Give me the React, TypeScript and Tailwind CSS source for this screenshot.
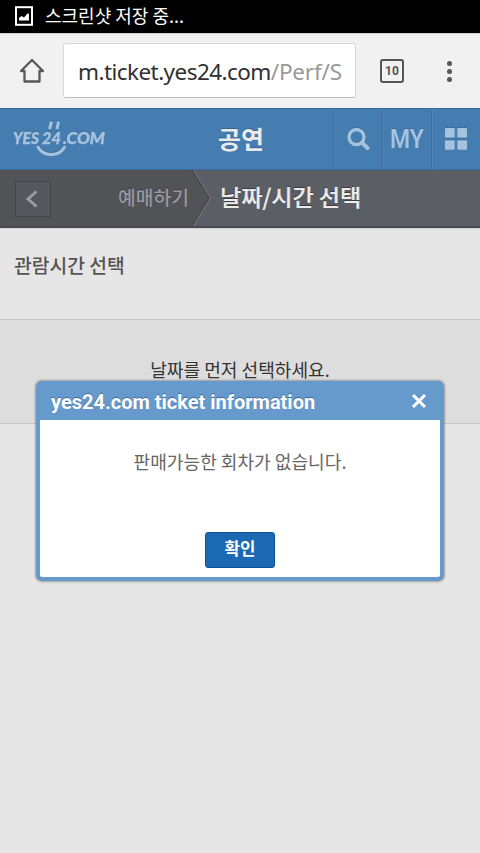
import { useState } from "react";

const sans = "font-['Noto_Sans_CJK_KR',sans-serif]";

function StatusBar() {
  return (
    <div className="h-[33px] bg-black flex items-center pl-[15px] gap-3 text-white">
      <svg width="18" height="20" viewBox="0 0 18 20" className="shrink-0 -mt-[2px]">
        <rect x="1" y="1.2" width="16" height="17.6" fill="none" stroke="#fff" strokeWidth="2" />
        <path d="M4 14.500v-2.500l2.500-2 2.500 1.500 4-4.500 1 1.500v6z" fill="#fff" />
      </svg>
      <span className="text-[18px] leading-none whitespace-nowrap -mt-[4px]">스크린샷 저장 중...</span>
    </div>
  );
}

function BrowserBar() {
  return (
    <div className="h-[75px] bg-[#f1f1f1] border-t border-[#d2d2d2] flex items-center">
      <button className="w-[63px] shrink-0 flex justify-center" aria-label="Home">
        <svg width="26" height="26" viewBox="0 0 26 26" fill="none" stroke="#585858" strokeWidth="2.300" strokeLinejoin="round">
          <path d="M13 2 2 13h3.500v10.500h15V13H24z" />
        </svg>
      </button>
      <div className="w-[293px] h-[55px] shrink-0 bg-white border border-[#d8d8d8] border-b-[#bdbdbd] rounded-[3px] pl-[14px] pr-[13px] -mt-[1px]">
        <div className="overflow-hidden whitespace-nowrap font-['Noto_Sans',sans-serif] text-[22.500px] tracking-[-0.560px] leading-[55px] text-[#303030]">
          m.ticket.yes24.com<span className="text-[#999] tracking-[-0.200px]">/Perf/S</span>
        </div>
      </div>
      <div className="ml-6 w-6 h-6 shrink-0 border-2 border-[#555] rounded-[3px] flex items-center justify-center font-['Roboto',sans-serif] font-bold text-[12px] text-[#555]">
        10
      </div>
      <div className="ml-[43px] flex flex-col gap-[3px]">
        <i className="size-[5px] rounded-full bg-[#555]" />
        <i className="size-[5px] rounded-full bg-[#555]" />
        <i className="size-[5px] rounded-full bg-[#555]" />
      </div>
    </div>
  );
}

function Logo() {
  return (
    <svg width="96" height="38" viewBox="0 0 96 38" fill="#a5c3df" className="drop-shadow-[0_-1px_0_#3a6b99]">
      <g fontFamily="Lato, sans-serif" fontWeight="900" fontStyle="italic" fontSize="17" stroke="#a5c3df" strokeWidth="0.400">
        <text x="1" y="24" textLength="26" lengthAdjust="spacingAndGlyphs">YES</text>
        <text x="30" y="24" textLength="19" lengthAdjust="spacingAndGlyphs">24</text>
        <text x="51" y="24" textLength="42" lengthAdjust="spacingAndGlyphs">.COM</text>
      </g>
      <path d="m39.500 1.500-2 7.500M46.500 1.500l-1.500 7.500" fill="none" stroke="#a5c3df" strokeWidth="3" />
      <path d="M26 27c5 9.500 21 10.500 26.500 0" fill="none" stroke="#a5c3df" strokeWidth="3" strokeLinecap="round" />
    </svg>
  );
}

function SiteHeader() {
  return (
    <header className="h-[62px] bg-[#467db1] border-t border-b border-t-[#386b9d] border-b-[#386b9d] flex items-stretch">
      <div className="w-[218px] shrink-0 pl-3 pt-[11px]">
        <Logo />
      </div>
      <h1 className="w-[115px] shrink-0 text-[25px] font-bold leading-[58px] text-[#e9eaeb] [text-shadow:0_-1px_0_#36648f]">
        공연
      </h1>
      <button className="w-[49px] shrink-0 border-l border-[#3e71a2] shadow-[inset_1px_0_0_#5186b7] flex items-center justify-center" aria-label="검색">
        <svg width="24" height="24" viewBox="0 0 24 24" fill="none" stroke="#a5c3df" className="drop-shadow-[0_-1px_0_#3a6b99]">
          <circle cx="10.500" cy="10" r="7.500" strokeWidth="3.300" />
          <path d="m16 15.500 5.500 5.500" strokeWidth="4" strokeLinecap="round" />
        </svg>
      </button>
      <button className="w-[49px] shrink-0 border-l border-[#3e71a2] shadow-[inset_1px_0_0_#5186b7] flex items-center justify-center" aria-label="MY">
        <svg width="38" height="34" viewBox="0 0 38 34" className="drop-shadow-[0_-1px_0_#3a6b99]">
          <text x="2" y="26" textLength="34" lengthAdjust="spacingAndGlyphs" fill="#a5c3df" fontFamily="Roboto, sans-serif" fontWeight="600" fontSize="25">MY</text>
        </svg>
      </button>
      <button className="w-[49px] shrink-0 border-l border-[#3e71a2] shadow-[inset_1px_0_0_#5186b7] flex items-center justify-center" aria-label="메뉴">
        <svg width="22" height="22" viewBox="0 0 22 22" fill="#a5c3df" className="-mt-[1px] drop-shadow-[0_-1px_0_#3a6b99]">
          <rect x="0" y="0" width="9.700" height="9.500" rx="1" />
          <rect x="12.300" y="0" width="9.700" height="9.500" rx="1" />
          <rect x="0" y="12.300" width="9.700" height="9.500" rx="1" />
          <rect x="12.300" y="12.300" width="9.700" height="9.500" rx="1" />
        </svg>
      </button>
    </header>
  );
}

function StepBar() {
  return (
    <div className="h-[58px] bg-[#5c5e66] border-b-2 border-[#4a4a4e] flex">
      <div className="w-[191px] shrink-0 bg-[#525357] flex items-center justify-between pl-[15px] pr-[2px]">
        <button className="size-9 mt-[2px] border border-[#434447] bg-[#54575c] flex items-center justify-center pr-[3px]" aria-label="이전">
          <svg width="14" height="18" viewBox="0 0 14 18" fill="none" stroke="#9b9ba6" strokeWidth="3">
            <path d="M11.500 1.500 3 9l8.500 7.500" />
          </svg>
        </button>
        <span className="text-[19.300px] font-medium leading-none text-[#9897a3] [text-shadow:0_-1px_0_#3c3c40]">예매하기</span>
      </div>
      <svg width="20" height="56" viewBox="0 0 20 56" className="shrink-0">
        <path d="M0 0h1l17 28L1 56H0z" fill="#525357" />
        <path d="m1 0 17 28L1 56" fill="none" stroke="#3f4044" />
        <path d="m2.500 0 17 28-17 28" fill="none" stroke="#73757c" />
      </svg>
      <h2 className="pl-[9px] text-[23px] font-medium leading-[52px] text-[#ececec] [text-shadow:0_-1px_0_#3c3c40,0.3px_0_0_#ececec]">날짜/시간 선택</h2>
    </div>
  );
}

function Dialog({ onClose }: { onClose: () => void }) {
  return (
    <div className="absolute left-9 top-[381px] w-[408px] h-[200px] bg-[#6699cc] rounded-[6px] px-1 pb-1 flex flex-col shadow-[0_0_2px_1px_rgba(0,0,0,0.3)]">
      <div className="h-[39px] shrink-0 flex items-center justify-between pl-[11px] pr-[13px]">
        <h3 className="mt-[3px] font-['Roboto',sans-serif] font-bold text-[20px] leading-none text-white whitespace-nowrap [text-shadow:0_-1px_0_#3d6c9c]">
          yes24.com ticket information
        </h3>
        <button onClick={onClose} aria-label="닫기">
          <svg width="16" height="16" viewBox="0 0 16 16" fill="none" stroke="#fff" strokeWidth="3">
            <path d="m2 2 12 12M14 2 2 14" />
          </svg>
        </button>
      </div>
      <div className="flex-1 bg-white flex flex-col items-center rounded-b-[2px]">
        <p className="pt-[28px] text-[18.100px] leading-[26px] text-[#666] whitespace-nowrap">판매가능한 회차가 없습니다.</p>
        <button
          onClick={onClose}
          className="mt-[58px] w-[70px] h-9 rounded-[3px] border border-[#0a529b] bg-[#1b69b3] text-white text-[16.800px] font-bold leading-[31px] pb-[3px]"
        >
          확인
        </button>
      </div>
    </div>
  );
}

export default function App() {
  const [open, setOpen] = useState(true);

  return (
    <div className={`relative w-[480px] h-[853px] overflow-hidden bg-[#e6e6e6] ${sans}`}>
      <StatusBar />
      <BrowserBar />
      <SiteHeader />
      <StepBar />
      <main>
        <section className="h-[91px] pl-[14px] pt-[22px] border-t border-[#d2d2d2]">
          <h3 className="text-[19.300px] font-medium leading-[28px] text-[#555]">관람시간 선택</h3>
        </section>
        <section className="h-[105px] bg-[#dddddd] border-y border-[#c5c5c5] pt-[36px] text-center">
          <p className="text-[18.100px] leading-[26px] text-[#333]">날짜를 먼저 선택하세요.</p>
        </section>
      </main>
      {open && <Dialog onClose={() => setOpen(false)} />}
    </div>
  );
}
